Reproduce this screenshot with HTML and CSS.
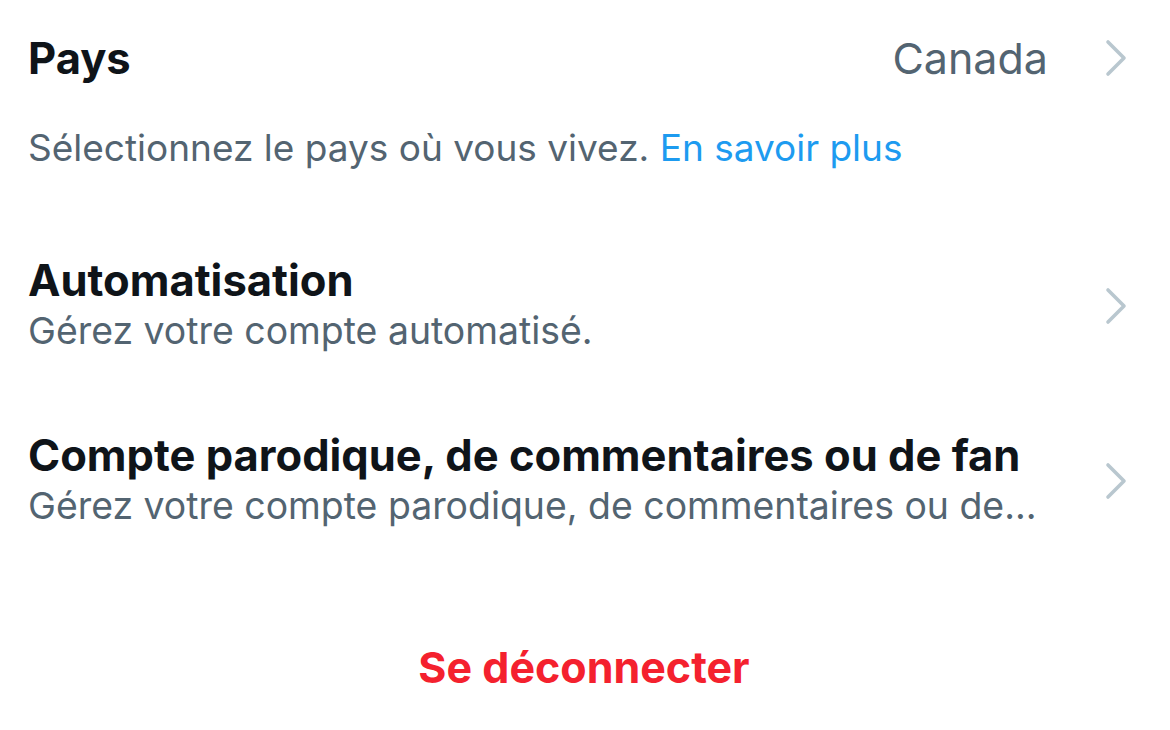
FILE: index.html
```html
<!DOCTYPE html>
<html lang="fr">
<head>
<meta charset="utf-8">
<link rel="stylesheet" href="styles.css">
</head>
<body>
<main class="page">
  <div class="row row-country">
    <div class="title">Pays</div>
    <div class="value">
      <span class="value-text">Canada</span>
      <svg class="chev" viewBox="0 0 24 40" width="24" height="40"><path d="M4 4 L20 20 L4 36" fill="none" stroke="#b9c7cf" stroke-width="3.6" stroke-linecap="round" stroke-linejoin="round"/></svg>
    </div>
  </div>
  <p class="help">Sélectionnez le pays où vous vivez. <a class="link">En savoir plus</a></p>

  <div class="row row-item item-auto">
    <div class="texts">
      <div class="title">Automatisation</div>
      <div class="sub">Gérez votre compte automatisé.</div>
    </div>
    <svg class="chev" viewBox="0 0 24 40" width="24" height="40"><path d="M4 4 L20 20 L4 36" fill="none" stroke="#b9c7cf" stroke-width="3.6" stroke-linecap="round" stroke-linejoin="round"/></svg>
  </div>

  <div class="row row-item item-parody">
    <div class="texts">
      <div class="title">Compte parodique, de commentaires ou de fan</div>
      <div class="sub">Gérez votre compte parodique, de commentaires ou de…</div>
    </div>
    <svg class="chev" viewBox="0 0 24 40" width="24" height="40"><path d="M4 4 L20 20 L4 36" fill="none" stroke="#b9c7cf" stroke-width="3.6" stroke-linecap="round" stroke-linejoin="round"/></svg>
  </div>

  <div class="logout">Se déconnecter</div>
</main>
</body>
</html>
```
FILE: styles.css
```css
html, body {
  margin: 0;
  padding: 0;
  background: #ffffff;
}
body {
  font-family: Inter, "Noto Sans", "Liberation Sans", sans-serif;
  width: 1170px;
  height: 730px;
  overflow: hidden;
}
.page {
  padding: 0 42px 0 28px;
  display: flex;
  flex-direction: column;
}
.row {
  display: flex;
  align-items: center;
  justify-content: space-between;
}
.row-country {
  height: 116px;
}
.title {
  font-size: 43.5px;
  font-weight: 700;
  color: #0f1419;
  line-height: 50px;
}
.value {
  display: flex;
  align-items: center;
  gap: 56px;
}
.value-text {
  font-size: 43px;
  color: #536471;
}
.help {
  margin: 0;
  font-size: 37px;
  line-height: 64px;
  color: #536471;
}
.link {
  color: #1d9bf0;
}
.item-auto {
  margin-top: 75px;
}
.item-parody {
  margin-top: 73px;
}
.sub {
  font-size: 37.4px;
  line-height: 52px;
  color: #536471;
}
.logout {
  margin-top: 109px;
  text-align: center;
  font-size: 43px;
  font-weight: 700;
  color: #f4212e;
  padding-left: 12px;
}
```
